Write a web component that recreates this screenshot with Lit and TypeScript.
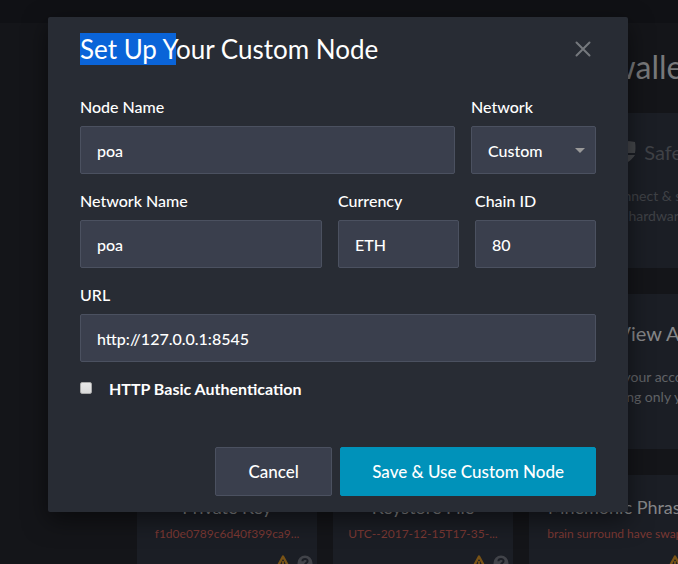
import { LitElement, html, css, svg } from "lit";
import { customElement } from "lit/decorators.js";

const warningIcon = html`<svg class="icon" viewBox="0 0 16 16" aria-hidden="true">
  ${svg`<path d="M8 1.5 15 14.5H1Z" fill="none" stroke="#795316" stroke-width="2.4" stroke-linejoin="round"/>
  <path d="M8 6v4.5M8 12v1.4" stroke="#795316" stroke-width="1.8"/>`}
</svg>`;

const helpIcon = html`<svg class="icon" viewBox="0 0 16 16" aria-hidden="true">
  ${svg`<circle cx="8" cy="8" r="7.5" fill="#414349"/>
  <path d="M5.4 6.2C5.5 3.3 10.6 3.3 10.6 6.1 10.6 8 8 7.8 8 9.8M8 11.2v1.8" fill="none" stroke="#1b1e25" stroke-width="2"/>`}
</svg>`;

@customElement("wallet-page")
class WalletPage extends LitElement {
  static styles = css`
    :host {
      display: block;
      min-height: 100vh;
      background: #141519;
      font-family: Lato, "Open Sans", sans-serif;
    }
    .bar {
      height: 23px;
      background: #101115;
    }
    .content {
      padding: 24px 0 0 137px;
    }
    h1 {
      margin: 0;
      width: 556px;
      height: 66px;
      line-height: 40px;
      font-size: 32px;
      font-weight: 400;
      color: #77787a;
      white-space: nowrap;
      display: flex;
      justify-content: center;
    }
    .wide {
      box-sizing: border-box;
      display: flex;
      justify-content: flex-end;
      width: 700px;
      height: 155px;
      margin-bottom: 26px;
      background: #1b1e25;
      border-radius: 2px;
    }
    .side {
      width: 320px;
      padding-top: 24px;
      text-align: center;
      font-size: 14px;
      line-height: 20px;
      color: #606266;
    }
    .side p {
      margin: 0;
    }
    h2 {
      display: flex;
      align-items: center;
      justify-content: center;
      gap: 8px;
      margin: 0 0 19px;
      height: 30px;
      font-size: 20px;
      font-weight: 400;
      color: #858688;
    }
    .muted {
      width: 316px;
    }
    .muted,
    .muted h2 {
      color: #3f4146;
    }
    .shield {
      width: 20px;
      height: 22px;
    }
    .row {
      display: flex;
      gap: 16px;
    }
    .card {
      box-sizing: border-box;
      flex: none;
      width: 180px;
      height: 120px;
      padding-top: 20px;
      background: #1b1e25;
      text-align: center;
      font-size: 12px;
      color: #7a3833;
      white-space: nowrap;
    }
    h3 {
      margin: 0 0 6px;
      font-size: 18px;
      line-height: 24px;
      font-weight: 400;
      color: #858688;
    }
    .card p {
      margin: 0;
      line-height: 18px;
    }
    .icons {
      display: flex;
      justify-content: flex-end;
      gap: 6px;
      padding: 12px 4px 0 0;
    }
    .icon {
      width: 16px;
      height: 16px;
    }
  `;

  render() {
    const cards = [
      ["Private Key", "f1d0e0789c6d40f399ca9..."],
      ["Keystore File", "UTC--2017-12-15T17-35-..."],
      ["Mnemonic Phrase", "brain surround have swap..."],
    ];
    return html`
      <div class="bar"></div>
      <div class="content">
        <h1>How would you like to access your wallet?</h1>
        <section class="wide">
          <div class="side muted">
            <h2>
              <svg class="shield" viewBox="0 0 20 22" aria-hidden="true">
                <path d="M1 1Q10-1 19 1Q20 7 19 12H1Q0 7 1 1ZM1 14H19Q16 19 10 22Q4 19 1 14Z" fill="#45474b" />
              </svg>
              Safe-T mini
            </h2>
            <p>Connect &amp; sign via your</p>
            <p>hardware wallet.</p>
          </div>
        </section>
        <section class="wide">
          <div class="side">
            <h2>View Address</h2>
            <p>Check your account balance by</p>
            <p>using only your wallet.</p>
          </div>
        </section>
        <div class="row">
          ${cards.map(
            ([title, example]) => html`<section class="card">
              <h3>${title}</h3>
              <p>${example}</p>
              <div class="icons">${warningIcon}${helpIcon}</div>
            </section>`
          )}
        </div>
      </div>
    `;
  }
}

@customElement("node-dialog")
class NodeDialog extends LitElement {
  static styles = css`
    :host {
      display: block;
      box-sizing: border-box;
      padding: 16px 32px;
      border-radius: 2px;
      background: #282c34;
      box-shadow: 0 8px 24px 0 rgba(0, 0, 0, 0.5);
      color: #fff;
      font-family: Lato, "Open Sans", sans-serif;
      font-size: 16px;
      font-weight: 500;
    }
    header {
      display: flex;
      align-items: center;
      justify-content: space-between;
      height: 31px;
      margin-bottom: 32px;
    }
    h2 {
      margin: 0;
      font-size: 26px;
      line-height: 32px;
      font-weight: 400;
    }
    .selected {
      background: #0a64d8;
    }
    button,
    input,
    select {
      font: inherit;
      color: inherit;
    }
    .close {
      display: flex;
      padding: 5px;
      border: 0;
      background: none;
    }
    .close svg {
      width: 16px;
      height: 16px;
    }
    form {
      display: grid;
      gap: 16px;
    }
    .row {
      display: grid;
      gap: 16px;
    }
    .two {
      grid-template-columns: 3fr 1fr;
    }
    .three {
      grid-template-columns: 2fr 1fr 1fr;
    }
    .field {
      display: grid;
      gap: 8px;
      min-width: 0;
      line-height: 22px;
    }
    .control {
      box-sizing: border-box;
      width: 100%;
      height: 48px;
      padding: 0 16px;
      border: 1px solid #4b5160;
      border-radius: 2px;
      background: #3a3f4d;
      outline: none;
    }
    .pick {
      display: grid;
      align-items: center;
    }
    .pick > * {
      grid-area: 1 / 1;
    }
    .pick select {
      appearance: none;
      padding-top: 2px;
    }
    .arrow {
      justify-self: end;
      margin-right: 11px;
      border: 5px solid transparent;
      border-top-color: #999;
      border-bottom: 0;
      pointer-events: none;
    }
    .auth {
      display: flex;
      align-items: center;
      gap: 17px;
      height: 20px;
      font-weight: 700;
    }
    .auth input {
      appearance: none;
      box-sizing: border-box;
      width: 12px;
      height: 12px;
      margin: 0;
      border: 1px solid #a9a9a9;
      border-radius: 2px;
      background: linear-gradient(#e8e8e8, #dadada);
    }
    .auth input:checked {
      background: #0092ba;
    }
    footer {
      display: flex;
      justify-content: flex-end;
      gap: 8px;
      margin-top: 33px;
    }
    .button {
      min-width: 117px;
      height: 49px;
      padding: 0 31px;
      border: 1px solid #4b5160;
      border-radius: 2px;
      background: #3a3f4d;
      font-size: 17px;
    }
    .primary {
      border-color: #0092ba;
      background: #0092ba;
    }
  `;

  render() {
    return html`
      <header>
        <h2><span class="selected">Set Up Y</span>our Custom Node</h2>
        <button class="close" aria-label="Close">
          <svg viewBox="0 0 16 16" aria-hidden="true">
            <path d="M1.500 1.500 14.500 14.500M14.500 1.500 1.500 14.500" fill="none" stroke="#75787d" stroke-width="2" stroke-linecap="round" />
          </svg>
        </button>
      </header>
      <form @submit=${(e: Event) => e.preventDefault()}>
        <div class="row two">
          <label class="field">Node Name<input class="control" value="poa" /></label>
          <label class="field">Network
            <span class="pick">
              <select class="control"><option>Custom</option></select>
              <span class="arrow"></span>
            </span>
          </label>
        </div>
        <div class="row three">
          <label class="field">Network Name<input class="control" value="poa" /></label>
          <label class="field">Currency<input class="control" value="ETH" /></label>
          <label class="field">Chain ID<input class="control" value="80" /></label>
        </div>
        <label class="field">URL<input class="control" value="http://127.0.0.1:8545" /></label>
        <label class="auth"><input type="checkbox" />HTTP Basic Authentication</label>
        <footer>
          <button type="button" class="button">Cancel</button>
          <button class="button primary">Save &amp; Use Custom Node</button>
        </footer>
      </form>
    `;
  }
}

@customElement("app-root")
class AppRoot extends LitElement {
  static styles = css`
    :host {
      display: grid;
      height: 100vh;
      overflow: hidden;
    }
    .page,
    .layer {
      grid-area: 1 / 1;
      min-width: 0;
    }
    .page {
      overflow: hidden;
    }
    .layer {
      z-index: 1;
      padding: 17px 50px 0 48px;
    }
  `;

  render() {
    return html`
      <wallet-page class="page"></wallet-page>
      <div class="layer" role="dialog" aria-label="Set Up Your Custom Node"><node-dialog></node-dialog></div>
    `;
  }
}
